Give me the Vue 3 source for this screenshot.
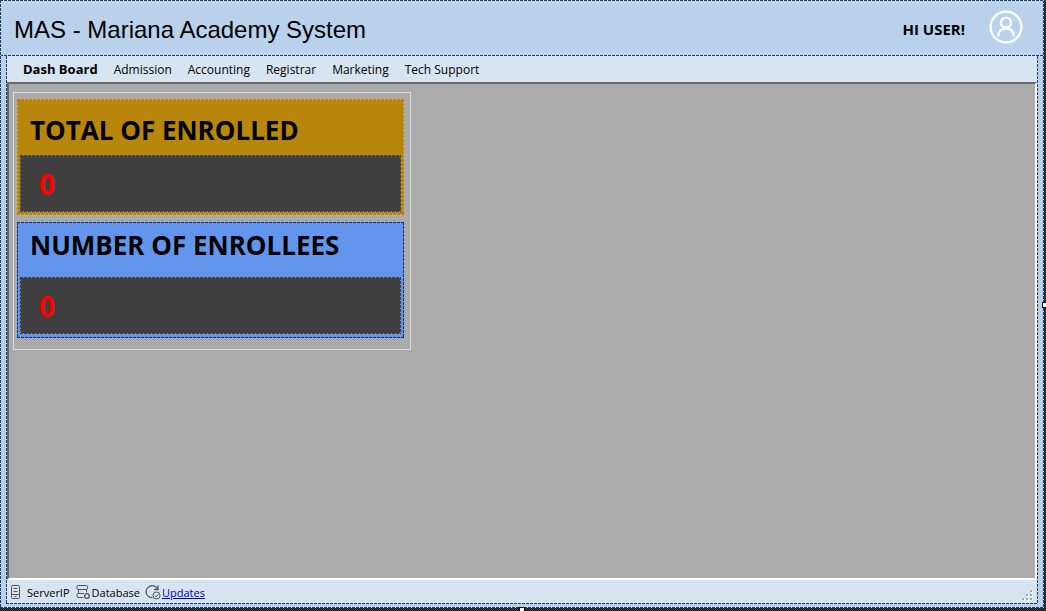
<script setup>
const menu = ['Dash Board', 'Admission', 'Accounting', 'Registrar', 'Marketing', 'Tech Support']
const cards = [
  { title: 'TOTAL OF ENROLLED', value: 0, tone: 'gold' },
  { title: 'NUMBER OF ENROLLEES', value: 0, tone: 'blue' },
]
</script>

<template>
  <div class="surface">
    <div class="form outline">
      <header class="header outline">
        <h1>MAS - Mariana Academy System</h1>
        <span class="greeting">HI USER!</span>
        <button class="avatar" aria-label="User account">
          <svg viewBox="0 0 34 34" width="34" height="34" fill="none" stroke="#fff">
            <circle cx="17" cy="17" r="15.4" stroke-width="2.2" />
            <circle cx="17" cy="12.6" r="5" stroke-width="2.4" />
            <path d="M9.2 26.2C9.4 21.4 12 18.4 17 18.4s7.600 3 7.800 7.800" stroke-width="2.4" />
          </svg>
        </button>
      </header>
      <div class="shell outline">
        <nav class="menu">
          <button v-for="(m, i) in menu" :key="m" :class="{ active: i === 0 }">{{ m }}</button>
        </nav>
        <main class="workspace">
          <div class="group">
            <section v-for="c in cards" :key="c.title" class="card outline" :class="c.tone">
              <h2>{{ c.title }}</h2>
              <div class="value outline">{{ c.value }}</div>
            </section>
          </div>
        </main>
        <footer class="status">
          <span class="item server">
            <svg viewBox="0 0 16 16" width="16" height="16" fill="none" stroke="#505458">
              <rect x="3.500" y="1.500" width="8" height="13" rx="1" />
              <path d="M5.500 4.500h4M5.500 7.500h4M3.500 10.500h8M6.500 12.500h2" />
            </svg>
            ServerIP
          </span>
          <span class="item">
            <svg viewBox="0 0 16 16" width="16" height="16" fill="none" stroke="#505458">
              <path d="M8.500 13.500H3a1 1 0 0 1-1-1v-2a1 1 0 0 1 1-1h6M3 5.500h9M3 5.500a1 1 0 0 1-1-1v-2a1 1 0 0 1 1-1h8.500a1 1 0 0 1 1 1v2a1 1 0 0 1-1 1M3.500 5.500v4M11.500 5.500v3" />
              <circle cx="12" cy="12" r="2.300" stroke-width="1.300" />
            </svg>
            Database
          </span>
          <span class="item">
            <svg viewBox="0 0 16 16" width="16" height="16" fill="none" stroke="#505458">
              <path d="M12.500 5A6 6 0 1 0 7.500 13.700" stroke-width="1.300" />
              <path d="M13 1.500v4h-4" stroke-width="1.300" />
              <circle cx="11.500" cy="11.500" r="3.500" />
              <path d="M9.800 11.500l1.300 1.300 2.300-2.500" />
            </svg>
            <a href="#">Updates</a>
          </span>
          <svg class="grip" viewBox="0 0 12 12" width="12" height="12">
            <g fill="#fff"><path d="M9 1h2v2H9zM5 5h2v2H5zM9 5h2v2H9zM1 9h2v2H1zM5 9h2v2H5zM9 9h2v2H9z" /></g>
            <g fill="#a3a8ad"><path d="M8 0h2v2H8zM4 4h2v2H4zM8 4h2v2H8zM0 8h2v2H0zM4 8h2v2H4zM8 8h2v2H8z" /></g>
          </svg>
        </footer>
      </div>
    </div>
    <i class="handle right"></i>
    <i class="handle bottom"></i>
  </div>
</template>

<style>
body {
  margin: 0;
}
</style>

<style scoped>
* {
  box-sizing: border-box;
}
.surface {
  position: relative;
  height: 100vh;
  display: flex;
  overflow: hidden;
  padding: 0 2px 3px 0;
  background: repeating-conic-gradient(#111820 0 25%, #34404e 0 50%) 0 0 / 2px 2px;
  font-family: "Open Sans", "Noto Sans", sans-serif;
  font-size: 12px;
  color: #000;
}
.outline {
  --line: #1f3d66;
  --gap: #cfe0f2;
  --top: 1px;
  position: relative;
}
.outline::after {
  content: "";
  position: absolute;
  inset: 0;
  pointer-events: none;
  background:
    repeating-linear-gradient(90deg, var(--line) 0 3px, var(--gap) 3px 4px) top / 100% var(--top) no-repeat,
    repeating-linear-gradient(90deg, var(--line) 0 3px, var(--gap) 3px 4px) bottom / 100% 1px no-repeat,
    repeating-linear-gradient(var(--line) 0 3px, var(--gap) 3px 4px) left / 1px 100% no-repeat,
    repeating-linear-gradient(var(--line) 0 3px, var(--gap) 3px 4px) right / 1px 100% no-repeat;
}
button {
  border: 0;
  padding: 0;
  background: none;
  font: inherit;
  color: inherit;
}
.form {
  flex: 1;
  display: flex;
  flex-direction: column;
  padding-bottom: 4px;
  background: #b9d1ea;
}
.header {
  flex: none;
  display: flex;
  align-items: center;
  height: 56px;
  padding: 4px 21px 0 14px;
}
h1 {
  flex: 1;
  margin: 0;
  font: 24px/32px "Liberation Sans", Arial, sans-serif;
}
.greeting {
  padding-bottom: 2px;
  font-size: 15px;
  font-weight: 700;
}
.avatar {
  height: 34px;
  margin: 0 0 6px 24px;
}
.avatar svg {
  display: block;
}
.shell {
  --top: 0px;
  flex: 1;
  display: flex;
  flex-direction: column;
  margin: 0 6px;
  padding: 0 1px 1px;
  background: #d7e4f2;
}
.menu {
  flex: none;
  display: flex;
  align-items: center;
  gap: 16px;
  height: 26px;
  padding-left: 16px;
}
.menu .active {
  font-size: 13px;
  font-weight: 700;
}
.workspace {
  flex: 1;
  padding: 8px 4px;
  background: #ababab;
  border: 2px solid;
  border-color: #696969 #fff #fff #696969;
}
.group {
  width: 398px;
  padding: 6px 6px 11px 3px;
  border: 1px solid #dcdcdc;
  background: repeating-conic-gradient(#a4a4a4 0 25%, #b2b2b2 0 50%) 0 0 / 2px 2px;
}
.card {
  padding: 3px;
}
.card + .card {
  margin-top: 7px;
}
.gold {
  --line: #b8860b;
  --gap: #e0c070;
  background: #b8860b;
}
.blue {
  --line: #10306e;
  --gap: #6495ed;
  padding-bottom: 4px;
  background: #6495ed;
}
h2 {
  height: 53px;
  margin: 0;
  padding-left: 10px;
  font-size: 26px;
  line-height: 56px;
}
.blue h2 {
  height: 52px;
  line-height: 40px;
}
.value {
  --line: #404040;
  --gap: #8a8a8a;
  height: 57px;
  padding-left: 19px;
  background: #404040;
  color: #f00;
  font-size: 28px;
  font-weight: 700;
  line-height: 58px;
}
.status {
  flex: none;
  display: flex;
  align-items: center;
  gap: 5px;
  height: 23px;
  padding: 1px 3px 0 1px;
  font-size: 11px;
}
.item {
  display: flex;
  align-items: center;
  gap: 1px;
}
.server {
  gap: 3px;
}
a {
  color: #00c;
}
.grip {
  align-self: flex-end;
  margin: 0 0 1px auto;
}
.handle {
  position: absolute;
  width: 6px;
  height: 6px;
  background: #fff;
  border: 1px solid #000;
}
.right {
  right: -2px;
  top: calc(50% - 4px);
}
.bottom {
  left: calc(50% - 4px);
  bottom: -2px;
}
</style>
